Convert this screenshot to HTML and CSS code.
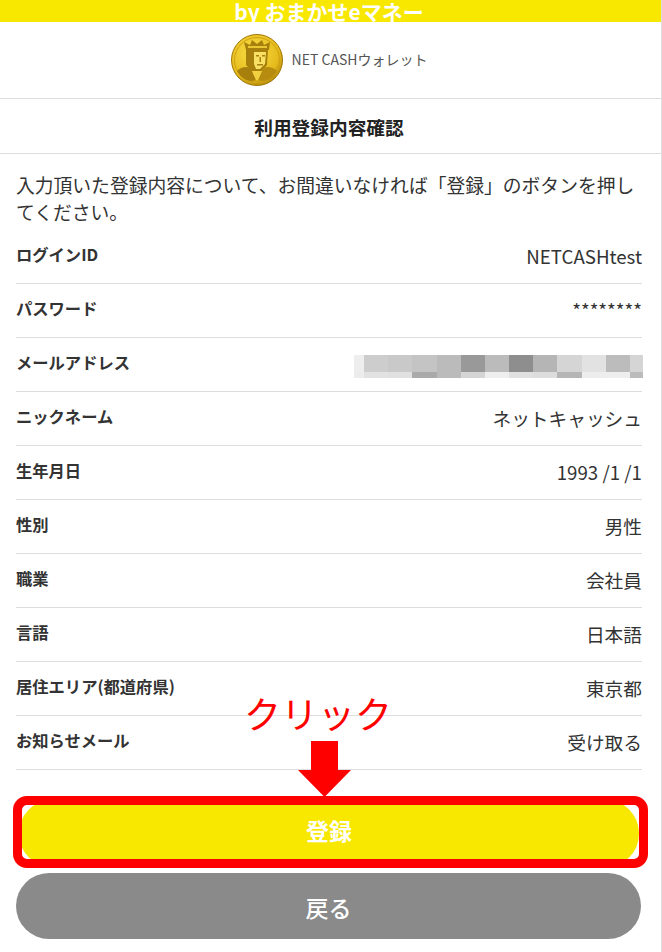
FILE: index.html
```html
<!DOCTYPE html>
<html lang="ja">
<head>
  <meta charset="UTF-8" />
  <meta name="viewport" content="width=device-width, initial-scale=1.0"/>
  <title>利用登録内容確認</title>
  <link rel="stylesheet" href="styles.css">
</head>
<body>
  <div class="topbar">by おまかせeマネー</div>
  <header class="brand">
    <svg class="coin" viewBox="0 0 52 52" width="52" height="52">
      <defs>
        <radialGradient id="gold" cx="42%" cy="35%" r="72%">
          <stop offset="0" stop-color="#f9de48"/>
          <stop offset="0.7" stop-color="#e6bb1c"/>
          <stop offset="1" stop-color="#a97e08"/>
        </radialGradient>
      </defs>
      <circle cx="26" cy="26" r="25.500" fill="url(#gold)" stroke="#a07806" stroke-width="1"/>
      <circle cx="26" cy="26" r="22.500" fill="none" stroke="#cfa213" stroke-width="1"/>
      <path d="M15 16L13 8l6 3 2-5 5 4 5-4 2 5 6-3-1 8z" fill="#a67f0c"/>
      <path d="M15 16h22l-1 15-5 6H21l-6-6z" fill="#a67f0c"/>
      <path d="M17 12h19v2H17z" fill="#e9c733"/>
      <path d="M23 18h12l-1 12-5 5h-4l-2-5z" fill="#f7e063"/>
      <path d="M25 21h3v1.500h-3zM31 21h3v1.500h-3zM28.500 23h1.500v5h-1.500zM26 30h6v1.500h-6z" fill="#a67f0c"/>
      <path d="M6 37c4-4 9-5 14-3l5 12c-7 3-14-1-19-9z" fill="#a67f0c"/>
      <path d="M46 37c-4-4-9-5-14-3l-5 12c7 3 14-1 19-9z" fill="#b58c10"/>
      <path d="M21 37h10l-4 9h-2z" fill="#f1d040"/>
    </svg>
    <span class="brand-name">NET CASHウォレット</span>
  </header>
  <h1 class="title">利用登録内容確認</h1>

  <main class="content">
    <p class="intro">入力頂いた登録内容について、お間違いなければ「登録」のボタンを押してください。</p>
    <dl class="details">
      <div class="row"><dt>ログインID</dt><dd>NETCASHtest</dd></div>
      <div class="row"><dt>パスワード</dt><dd>********</dd></div>
      <div class="row">
        <dt>メールアドレス</dt>
        <dd>
          <svg class="mosaic" viewBox="0 0 287 23" width="289" height="23" preserveAspectRatio="none" shape-rendering="crispEdges">
            <rect x="0" y="0" width="10" height="17" fill="#eeeeee"/>
            <rect x="10" y="0" width="24" height="17" fill="#cdcdcd"/>
            <rect x="34" y="0" width="24" height="17" fill="#c9c9c9"/>
            <rect x="58" y="0" width="24" height="17" fill="#c4c4c4"/>
            <rect x="82" y="0" width="24" height="23" fill="#bbbbbb"/>
            <rect x="106" y="0" width="24" height="17" fill="#999999"/>
            <rect x="130" y="0" width="24" height="17" fill="#bbbbbb"/>
            <rect x="154" y="0" width="24" height="17" fill="#8e8e8e"/>
            <rect x="178" y="0" width="24" height="17" fill="#b5b5b5"/>
            <rect x="202" y="0" width="24" height="17" fill="#d5d5d5"/>
            <rect x="226" y="0" width="24" height="17" fill="#e2e2e2"/>
            <rect x="250" y="0" width="24" height="17" fill="#bcbcbc"/>
            <rect x="274" y="0" width="13" height="17" fill="#d5d5d5"/>
            <rect x="0" y="17" width="10" height="6" fill="#ececec"/>
            <rect x="10" y="17" width="24" height="6" fill="#e2e2e2"/>
            <rect x="34" y="17" width="24" height="6" fill="#e0e0e0"/>
            <rect x="58" y="17" width="24" height="6" fill="#aaaaaa"/>
            <rect x="106" y="17" width="24" height="6" fill="#d5d5d5"/>
            <rect x="130" y="17" width="24" height="6" fill="#eeeeee"/>
            <rect x="154" y="17" width="24" height="6" fill="#e0e0e0"/>
            <rect x="178" y="17" width="24" height="6" fill="#dddddd"/>
            <rect x="202" y="17" width="24" height="6" fill="#b5b5b5"/>
            <rect x="226" y="17" width="24" height="6" fill="#ededed"/>
            <rect x="250" y="17" width="24" height="6" fill="#eeeeee"/>
            <rect x="274" y="17" width="13" height="6" fill="#bbbbbb"/>
          </svg>
        </dd>
      </div>
      <div class="row"><dt>ニックネーム</dt><dd>ネットキャッシュ</dd></div>
      <div class="row"><dt>生年月日</dt><dd>1993 /1 /1</dd></div>
      <div class="row"><dt>性別</dt><dd>男性</dd></div>
      <div class="row"><dt>職業</dt><dd>会社員</dd></div>
      <div class="row"><dt>言語</dt><dd>日本語</dd></div>
      <div class="row"><dt>居住エリア(都道府県)</dt><dd>東京都</dd></div>
      <div class="row"><dt>お知らせメール</dt><dd>受け取る</dd></div>
    </dl>
    <div class="actions">
      <button class="btn btn-primary">登録</button>
      <button class="btn btn-back">戻る</button>
    </div>
  </main>

  <!-- red annotation drawn over the page -->
  <div class="note-label">クリック</div>
  <svg class="note-arrow" viewBox="0 0 53 56" width="53" height="56">
    <path d="M13 0h27v29h13L26.500 56 0 29h13z" fill="#ff0000"/>
  </svg>
  <div class="note-box"></div>
</body>
</html>
```

FILE: styles.css
```css
body {
  font-family: "Noto Sans CJK JP", "Noto Sans", sans-serif;
  background: white;
  color: #333;
  margin: 0;
  height: 952px;
  position: relative;
  overflow: hidden;
  border-right: 1px solid #ddd;
}
.topbar {
  background: #f8e800;
  color: white;
  height: 22px;
  line-height: 22px;
  font-size: 21px;
  font-weight: 700;
  text-align: center;
  padding-right: 3px;
}
.brand {
  height: 76px;
  display: flex;
  align-items: center;
  justify-content: center;
  gap: 9px;
  padding-right: 3px;
  border-bottom: 1px solid #ddd;
}
.coin {
  flex: none;
}
.brand-name {
  font-size: 14px;
  color: #555;
  margin-top: -2px;
}
.title {
  margin: 0;
  height: 54px;
  line-height: 55px;
  padding-right: 3px;
  font-size: 18.7px;
  font-weight: 700;
  text-align: center;
  color: #222;
  border-bottom: 1px solid #ddd;
}
.content {
  padding: 17px 19px 0 16px;
}
.intro {
  margin: 0;
  font-size: 18.800px;
  line-height: 27px;
}
.details {
  margin: 5px 0 0;
}
.row {
  display: flex;
  justify-content: space-between;
  align-items: center;
  height: 53px;
  border-bottom: 1px solid #ddd;
}
.row:last-child {
  margin-bottom: 30px;
}
dt {
  font-size: 16.300px;
  font-weight: 700;
  margin-top: -6px;
}
dd {
  margin: 0;
  font-size: 18.7px;
  margin-top: -3px;
}
.mosaic {
  display: block;
  margin: 7px -1px 0 0;
}
.actions {
  display: flex;
  flex-direction: column;
  gap: 6px;
  margin-right: 1px;
}
.btn {
  height: 66.500px;
  border: none;
  border-radius: 33px;
  color: white;
  font-family: inherit;
  font-size: 23px;
  font-weight: 700;
}
.btn-primary {
  background: #f8e800;
  margin: 0 2px 0 3px;
  padding: 0 0 6px;
}
.btn-back {
  background: #8a8a8a;
  font-weight: 500;
  padding: 2px 0 0;
}
.note-label {
  position: absolute;
  left: 244px;
  top: 686px;
  font-size: 37px;
  line-height: 54px;
  color: #ff0000;
}
.note-arrow {
  position: absolute;
  left: 298px;
  top: 741px;
}
.note-box {
  position: absolute;
  left: 13px;
  top: 796px;
  width: 617px;
  height: 54px;
  border: 9px solid #ff0000;
  border-radius: 14px;
}
```
